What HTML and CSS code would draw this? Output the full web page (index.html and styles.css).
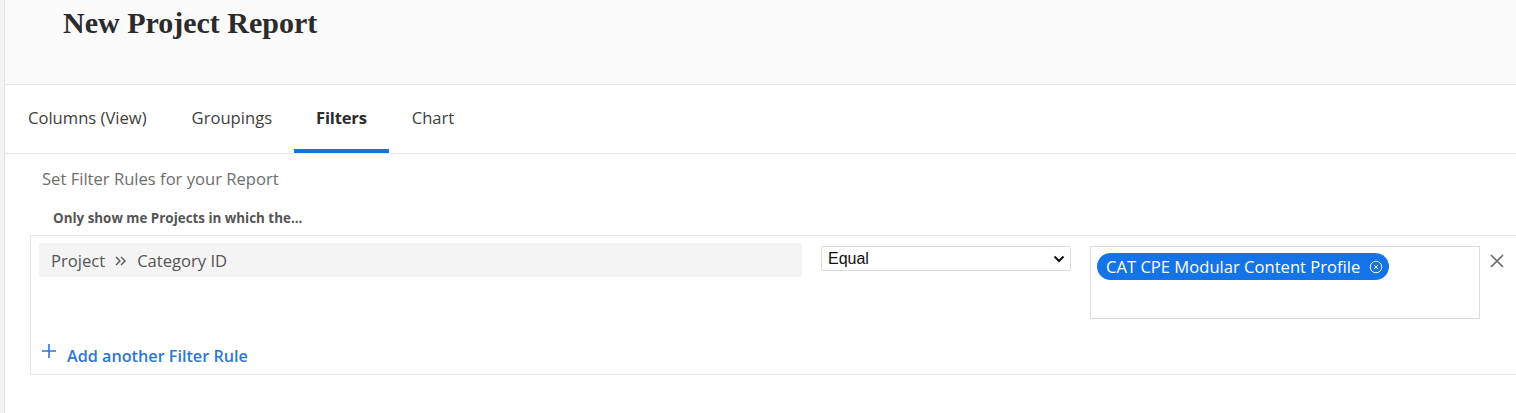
FILE: index.html
```html
<!DOCTYPE html>
<html>
<head>
<meta charset="utf-8">
<link rel="stylesheet" href="styles.css">
</head>
<body>
<div class="page">
  <header class="header">
    <h1 class="title">New Project Report</h1>
  </header>
  <nav class="tabs">
    <div class="tab">Columns (View)</div>
    <div class="tab">Groupings</div>
    <div class="tab active">Filters</div>
    <div class="tab">Chart</div>
  </nav>
  <main class="content">
    <div class="intro">Set Filter Rules for your Report</div>
    <div class="lead">Only show me Projects in which the...</div>
    <div class="rules">
      <div class="rule">
        <div class="field">
          <span>Project</span>
          <svg class="chev" width="14" height="14" viewBox="0 0 14 14"><path d="M2 3l4 4-4 4M7 3l4 4-4 4" fill="none" stroke="#555" stroke-width="1.4"/></svg>
          <span>Category ID</span>
        </div>
        <div class="select">
          <span>Equal</span>
          <svg width="12" height="8" viewBox="0 0 12 8"><path d="M1.5 1.5L6 6l4.5-4.5" fill="none" stroke="#111" stroke-width="2"/></svg>
        </div>
        <div class="values">
          <span class="chip">CAT CPE Modular Content Profile
            <svg class="chip-x" width="14" height="14" viewBox="0 0 14 14"><circle cx="7" cy="7" r="5.8" fill="none" stroke="#fff" stroke-width="1"/><path d="M5 5l4 4M9 5l-4 4" stroke="#fff" stroke-width="1"/></svg>
          </span>
        </div>
        <svg class="remove" width="14" height="14" viewBox="0 0 14 14"><path d="M1 1l12 12M13 1L1 13" stroke="#666" stroke-width="1.6"/></svg>
      </div>
      <div class="add">
        <svg class="plus" width="14" height="14" viewBox="0 0 14 14"><path d="M7 0v14M0 7h14" stroke="#2d77d6" stroke-width="1.6"/></svg>
        <span>Add another Filter Rule</span>
      </div>
    </div>
  </main>
</div>
</body>
</html>
```

FILE: styles.css
```css
html, body {
  margin: 0;
  padding: 0;
  background: #f4f4f4;
}
body {
  font-family: "Open Sans", "Liberation Sans", sans-serif;
  color: #333;
}
.page {
  margin-left: 4px;
  border-left: 1px solid #e2e2e2;
  background: #fff;
  min-height: 413px;
}
.header {
  background: #fafafa;
  border-bottom: 1px solid #e6e6e6;
  box-sizing: border-box;
  height: 85px;
}
.title {
  margin: 0;
  padding: 6px 0 0 58px;
  font-family: "Liberation Serif", serif;
  font-weight: bold;
  font-size: 30px;
  line-height: 34px;
  color: #2b2b2b;
}
.tabs {
  display: flex;
  height: 69px;
  border-bottom: 1px solid #e6e6e6;
  box-sizing: border-box;
}
.tab {
  padding: 0 22px 0 23px;
  display: flex;
  align-items: center;
  font-size: 16.6px;
  color: #404040;
  border-bottom: 4px solid transparent;
}
.tab.active {
  font-weight: bold;
  color: #2c2c2c;
  border-bottom-color: #1473e6;
  padding: 0 22px 0 22px;
  letter-spacing: -0.2px;
}
.content {
  padding: 14px 0 38px 25px;
}
.intro {
  font-size: 16.6px;
  color: #6e6e6e;
  margin-left: 12px;
  line-height: 22px;
}
.lead {
  font-size: 13.4px;
  font-weight: bold;
  color: #555;
  margin: 20px 0 0 23px;
  line-height: 16px;
}
.rules {
  margin-top: 9px;
  border: 1px solid #e6e6e6;
  border-right: none;
  padding: 7px 0 0 8px;
}
.rule {
  display: flex;
  align-items: flex-start;
}
.field {
  width: 763px;
  height: 34px;
  background: #f4f4f4;
  border-radius: 2px;
  display: flex;
  align-items: center;
  gap: 9px;
  padding-left: 12px;
  box-sizing: border-box;
  font-size: 16.6px;
  color: #555;
}
.chev {
  margin-top: 1px;
}
.select {
  margin: 3px 0 0 19px;
  width: 250px;
  height: 25px;
  border: 1px solid #dcdcdc;
  border-radius: 2px;
  box-sizing: border-box;
  display: flex;
  align-items: center;
  justify-content: space-between;
  padding: 0 5px 0 6px;
  font-family: "Liberation Sans", sans-serif;
  font-size: 16px;
  color: #111;
}
.values {
  margin: 3px 0 0 19px;
  width: 390px;
  height: 73px;
  border: 1px solid #dcdcdc;
  box-sizing: border-box;
  padding: 6px 6px;
}
.chip {
  display: inline-flex;
  align-items: center;
  gap: 9px;
  height: 27px;
  padding: 0 6px 0 9px;
  background: #1473e6;
  color: #fff;
  border-radius: 14px;
  font-size: 16.6px;
}
.remove {
  margin: 11px 0 0 10px;
}
.add {
  display: flex;
  align-items: center;
  gap: 11px;
  padding: 26px 0 7px 3px;
  color: #2d77d6;
  font-size: 16.2px;
  font-weight: 600;
  line-height: 22px;
}
.plus {
  margin-top: -10px;
}
```
